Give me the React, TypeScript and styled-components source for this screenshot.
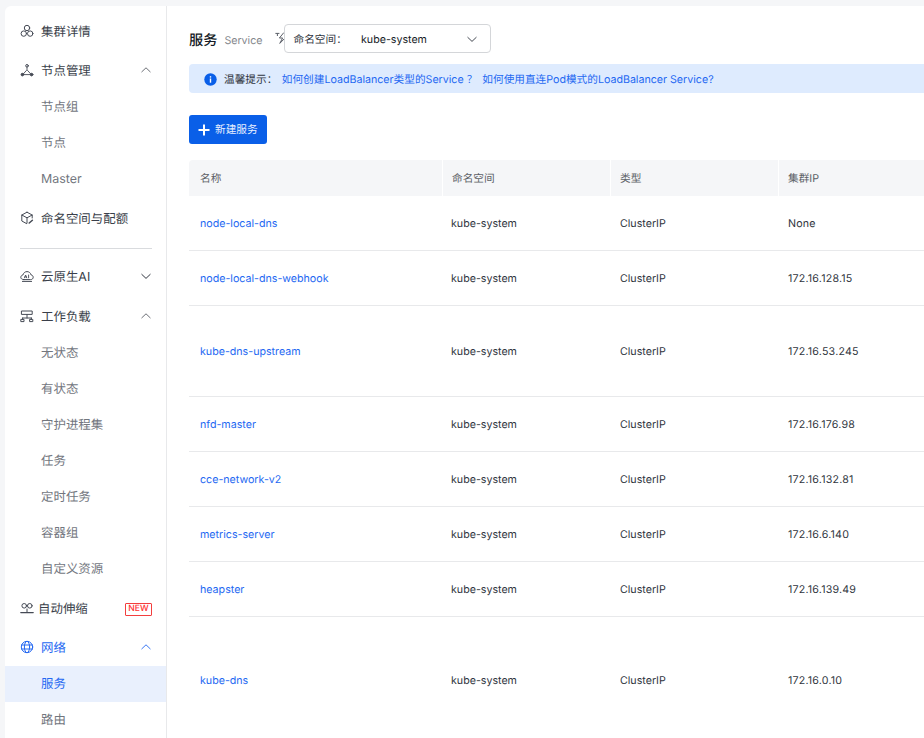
import React from "react";
import styled, { createGlobalStyle } from "styled-components";

const Global = createGlobalStyle`
  html, body { margin: 0; padding: 0; background: #f5f6f8; }
  body { font-family: Inter, "Noto Sans CJK SC", "Noto Sans", sans-serif; text-rendering: geometricPrecision; }
`;

const Page = styled.div`
  width: 924px;
  height: 738px;
  overflow: hidden;
  display: flex;
  align-items: stretch;
  padding: 6px 0 0 5px;
  box-sizing: border-box;
  background: #f5f6f8;
`;

const Sidebar = styled.nav`
  flex: 0 0 162px;
  box-sizing: border-box;
  background: #fff;
  border-right: 1px solid #e8e9eb;
  border-top-left-radius: 6px;
  padding-top: 8px;
  display: flex;
  flex-direction: column;
`;

const TopItem = styled.div<{ $active?: boolean; $mt?: number }>`
  flex: 0 0 36px;
  box-sizing: border-box;
  margin-top: ${(p) => p.$mt ?? 0}px;
  display: flex;
  align-items: center;
  padding: 0 15px 3px;
  font-size: 12.45px;
  color: ${(p) => (p.$active ? "#2468f2" : "#3a3f4a")};
`;

const IconSlot = styled.span<{ $w?: number }>`
  flex: 0 0 ${(p) => p.$w ?? 21}px;
  display: flex;
  align-items: center;
  color: #454a55;
  svg { display: block; }
`;

const ActiveIconSlot = styled(IconSlot)`
  color: #2468f2;
`;

const Label = styled.span`
  flex: 1;
`;

const ChevronSlot = styled.span<{ $dark?: boolean; $active?: boolean }>`
  display: flex;
  margin-right: -1px;
  color: ${(p) => (p.$active ? "#2468f2" : p.$dark ? "#1a1f2a" : "#5c6068")};
`;

const SubItem = styled.div<{ $active?: boolean; $latin?: boolean }>`
  flex: 0 0 36px;
  box-sizing: border-box;
  display: flex;
  align-items: center;
  padding: 0 0 ${(p) => (p.$latin ? 0 : 3)}px 36px;
  font-size: 12.45px;
  color: ${(p) => (p.$active ? "#2468f2" : "#72767e")};
  background: ${(p) => (p.$active ? "#e9f0fd" : "transparent")};
`;

const Divider = styled.div`
  height: 1px;
  background: #d9dbde;
  margin: 11px 14px 10px 15px;
`;

const NewBadge = styled.span`
  box-sizing: border-box;
  width: 27px;
  height: 13px;
  display: flex;
  align-items: center;
  justify-content: center;
  margin: 3px -1px 0 0;
  border: 1px solid #f33e3e;
  border-radius: 1px;
  color: #ff3333;
  font-size: 8.6px;
  font-weight: 500;
`;

const Main = styled.main`
  flex: 1;
  min-width: 0;
  background: #fff;
  padding: 18px 0 0 22px;
  overflow: hidden;
`;

const TitleRow = styled.div`
  display: flex;
  align-items: center;
  height: 29px;
`;

const Title = styled.h1`
  margin: 3px 0 0;
  font-size: 14.2px;
  font-weight: 500;
  color: #151b26;
`;

const SubTitle = styled.span`
  font-size: 10.67px;
  color: #84868c;
  margin-left: 7px;
  margin-top: 3px;
`;

const BoltSlot = styled.span`
  width: 16px;
  margin-left: 12px;
  margin-top: -1px;
  display: flex;
  svg { display: block; }
`;

const Select = styled.div`
  position: relative;
  box-sizing: border-box;
  width: 207px;
  height: 29px;
  margin-left: -7px;
  border: 1px solid #d4d6d9;
  border-radius: 4px;
  background: #fff;
  display: flex;
  align-items: center;
  padding: 1px 12px 0 9px;
  font-size: 10.67px;
  color: #303540;
`;

const SelectLabel = styled.span`
  flex: 0 0 67.5px;
`;

const SelectValue = styled.span`
  flex: 1;
  color: #151b26;
`;

const Notice = styled.div`
  box-sizing: border-box;
  margin-top: 11px;
  height: 29px;
  background: #deebfe;
  border-radius: 4px 0 0 4px;
  display: flex;
  align-items: center;
  padding: 1px 0 0 15px;
  font-size: 10.67px;
  white-space: nowrap;
  color: #303540;
`;

const NoticeLabel = styled.span`
  margin-left: 7px;
  margin-right: 4.5px;
`;

const Link = styled.a`
  color: #2468f2;
  margin-right: 5px;
`;

const Primary = styled.button`
  margin-top: 22px;
  display: flex;
  align-items: center;
  gap: 5px;
  width: 78px;
  height: 29px;
  box-sizing: border-box;
  padding: 0 0 2px 9px;
  border: 0;
  border-radius: 3px;
  background: #0a5fe8;
  color: #e8f0ff;
  font-family: inherit;
  font-size: 10.67px;
  svg { display: block; margin-top: 2px; }
`;

const Table = styled.table`
  margin-top: 16px;
  border-collapse: separate;
  border-spacing: 0;
  table-layout: fixed;
  width: 760px;
  font-size: 10.67px;
  color: #303540;
`;

const Th = styled.th`
  height: 36px;
  padding: 0 0 0 9px;
  background: #f5f6f8;
  border-right: 1px solid #fff;
  text-align: left;
  font-weight: 400;
  color: #5c5f66;
  box-sizing: border-box;
  &:first-child { border-top-left-radius: 4px; padding-left: 11px; }
`;

const Td = styled.td<{ $h: number }>`
  height: ${(p) => p.$h}px;
  box-sizing: border-box;
  padding: 0 0 0 8px;
  border-bottom: 1px solid #e8e9eb;
  white-space: nowrap;
  &:first-child { padding-left: 11px; }
  &:nth-child(n + 3) { padding-left: 9px; }
  &:nth-child(4) { letter-spacing: 0.2px; }
`;

const RowLink = styled.a`
  color: #2468f2;
`;

const stroke = { fill: "none", stroke: "currentColor", strokeWidth: 1, strokeLinecap: "round" as const, strokeLinejoin: "round" as const };

const ClusterIcon = () => (
  <svg width="14" height="14" viewBox="0 0 14 14" {...stroke}>
    <circle cx="7" cy="4" r="2.7" />
    <circle cx="3.8" cy="9.6" r="2.7" />
    <circle cx="10.2" cy="9.6" r="2.7" />
  </svg>
);
const NodesIcon = () => (
  <svg width="14" height="14" viewBox="0 0 14 14" {...stroke}>
    <path d="M7 4V7M6.4 7.5L3.4 10.8M7.6 7.5L10.6 10.8M4 11.6H10" strokeWidth="0.9" />
    <circle cx="7" cy="2.8" r="1.3" />
    <circle cx="2.4" cy="11.6" r="1.3" fill="currentColor" />
    <circle cx="11.6" cy="11.6" r="1.3" fill="currentColor" />
  </svg>
);
const CubeIcon = () => (
  <svg width="14" height="14" viewBox="0 0 14 14" {...stroke}>
    <path d="M7 1.2L12.2 4V7M6.6 12.6L1.8 10V4L7 1.2M1.8 4L7 6.8L12.2 4M7 6.8V12" />
    <path d="M9.2 12L12.4 9.2" strokeWidth="1.5" />
  </svg>
);
const CloudAiIcon = () => (
  <svg width="14" height="14" viewBox="0 0 14 14" {...stroke}>
    <path d="M3.8 10.6H10.6C12.2 10.6 13.2 9.5 13.2 8.3C13.2 7 12.2 6 11 5.9C10.6 3.9 9 2.6 7 2.6C5 2.6 3.5 3.9 3 5.9C1.8 6.1 0.8 7.1 0.8 8.4C0.8 9.6 2 10.6 3.8 10.6Z" />
    <path d="M4.5 8.8L5.6 6L6.7 8.8M4.9 7.9H6.3M8.6 6V8.8" strokeWidth="0.9" />
    <path d="M2.4 12.4H11.6" />
  </svg>
);
const WorkloadIcon = () => (
  <svg width="14" height="14" viewBox="0 0 14 14" {...stroke}>
    <rect x="1.8" y="2" width="10.4" height="3.4" />
    <path d="M7 5.4V9M2.6 9H11.4M2.6 9V10.4M11.4 9V10.4" />
    <rect x="1.2" y="10.4" width="2.8" height="2.2" />
    <rect x="10" y="10.4" width="2.8" height="2.2" />
  </svg>
);
const ScaleIcon = () => (
  <svg width="14" height="14" viewBox="0 0 14 14" {...stroke}>
    <circle cx="4.2" cy="4.8" r="2.3" />
    <circle cx="9.8" cy="4.8" r="2.3" />
    <path d="M6.5 4.8H7.5M7 8V11" />
    <path d="M0.8 11.6H13.2" strokeWidth="1.3" />
  </svg>
);
const GlobeIcon = () => (
  <svg width="14" height="14" viewBox="0 0 14 14" {...stroke}>
    <circle cx="7" cy="7" r="5.7" />
    <ellipse cx="7" cy="7" rx="2.6" ry="5.7" />
    <path d="M1.5 5H12.5M1.5 9H12.5" />
  </svg>
);
const Chevron = ({ up, size = 12 }: { up?: boolean; size?: number }) => (
  <svg width={size} height={size} viewBox="0 0 12 12" fill="none" stroke="currentColor" strokeWidth="0.9" strokeLinecap="round" strokeLinejoin="round">
    <path d={up ? "M1.8 7.8L6 3.8L10.2 7.8" : "M1.8 4.4L6 8.4L10.2 4.4"} />
  </svg>
);
const Bolt = () => (
  <svg width="12" height="12" viewBox="0 0 12 12" fill="none" stroke="#5a5e67" strokeWidth="1" strokeLinejoin="round">
    <path d="M8.8 0.6L4.4 6H7.6L4.8 11.4L10.4 5.6" />
    <path d="M0.4 1.4H4.4M2.4 1.4V4" />
  </svg>
);
const InfoIcon = () => (
  <svg width="13" height="13" viewBox="0 0 13 13">
    <circle cx="6.5" cy="6.5" r="6.2" fill="#0a5fe8" />
    <rect x="5.8" y="5.5" width="1.4" height="4.2" fill="#fff" />
    <rect x="5.8" y="3.2" width="1.4" height="1.4" fill="#fff" />
  </svg>
);
const PlusIcon = () => (
  <svg width="12" height="12" viewBox="0 0 12 12" stroke="#fff" strokeWidth="2">
    <path d="M6 0.5V11.5M0.5 6H11.5" />
  </svg>
);

const rows = [
  { name: "node-local-dns", ip: "None", h: 55 },
  { name: "node-local-dns-webhook", ip: "172.16.128.15", h: 55 },
  { name: "kube-dns-upstream", ip: "172.16.53.245", h: 91 },
  { name: "nfd-master", ip: "172.16.176.98", h: 55 },
  { name: "cce-network-v2", ip: "172.16.132.81", h: 55 },
  { name: "metrics-server", ip: "172.16.6.140", h: 55 },
  { name: "heapster", ip: "172.16.139.49", h: 55 },
  { name: "kube-dns", ip: "172.16.0.10", h: 127 },
];

export default function App() {
  return (
    <>
      <Global />
      <Page>
        <Sidebar>
          <TopItem>
            <IconSlot><ClusterIcon /></IconSlot>
            <Label>集群详情</Label>
          </TopItem>
          <TopItem $mt={3}>
            <IconSlot><NodesIcon /></IconSlot>
            <Label>节点管理</Label>
            <ChevronSlot><Chevron up /></ChevronSlot>
          </TopItem>
          <SubItem>节点组</SubItem>
          <SubItem>节点</SubItem>
          <SubItem $latin>Master</SubItem>
          <TopItem $mt={4}>
            <IconSlot><CubeIcon /></IconSlot>
            <Label>命名空间与配额</Label>
          </TopItem>
          <Divider />
          <TopItem>
            <IconSlot><CloudAiIcon /></IconSlot>
            <Label>云原生AI</Label>
            <ChevronSlot $dark><Chevron /></ChevronSlot>
          </TopItem>
          <TopItem $mt={4}>
            <IconSlot><WorkloadIcon /></IconSlot>
            <Label>工作负载</Label>
            <ChevronSlot><Chevron up /></ChevronSlot>
          </TopItem>
          <SubItem>无状态</SubItem>
          <SubItem>有状态</SubItem>
          <SubItem>守护进程集</SubItem>
          <SubItem>任务</SubItem>
          <SubItem>定时任务</SubItem>
          <SubItem>容器组</SubItem>
          <SubItem>自定义资源</SubItem>
          <TopItem $mt={4}>
            <IconSlot $w={18}><ScaleIcon /></IconSlot>
            <Label>自动伸缩</Label>
            <NewBadge>NEW</NewBadge>
          </TopItem>
          <TopItem $active $mt={3}>
            <ActiveIconSlot><GlobeIcon /></ActiveIconSlot>
            <Label>网络</Label>
            <ChevronSlot $active><Chevron up /></ChevronSlot>
          </TopItem>
          <SubItem $active>服务</SubItem>
          <SubItem>路由</SubItem>
        </Sidebar>
        <Main>
          <TitleRow>
            <Title>服务</Title>
            <SubTitle>Service</SubTitle>
            <BoltSlot><Bolt /></BoltSlot>
            <Select>
              <SelectLabel>命名空间：</SelectLabel>
              <SelectValue>kube-system</SelectValue>
              <Chevron size={12} />
            </Select>
          </TitleRow>
          <Notice>
            <InfoIcon />
            <NoticeLabel>温馨提示：</NoticeLabel>
            <Link>如何创建LoadBalancer类型的Service ？</Link>
            <Link>如何使用直连Pod模式的LoadBalancer Service?</Link>
          </Notice>
          <Primary>
            <PlusIcon />
            新建服务
          </Primary>
          <Table>
            <colgroup>
              <col style={{ width: 254 }} />
              <col style={{ width: 168 }} />
              <col style={{ width: 168 }} />
              <col style={{ width: 170 }} />
            </colgroup>
            <thead>
              <tr>
                <Th>名称</Th>
                <Th>命名空间</Th>
                <Th>类型</Th>
                <Th>集群IP</Th>
              </tr>
            </thead>
            <tbody>
              {rows.map((r) => (
                <tr key={r.name}>
                  <Td $h={r.h}><RowLink>{r.name}</RowLink></Td>
                  <Td $h={r.h}>kube-system</Td>
                  <Td $h={r.h}>ClusterIP</Td>
                  <Td $h={r.h}>{r.ip}</Td>
                </tr>
              ))}
            </tbody>
          </Table>
        </Main>
      </Page>
    </>
  );
}
